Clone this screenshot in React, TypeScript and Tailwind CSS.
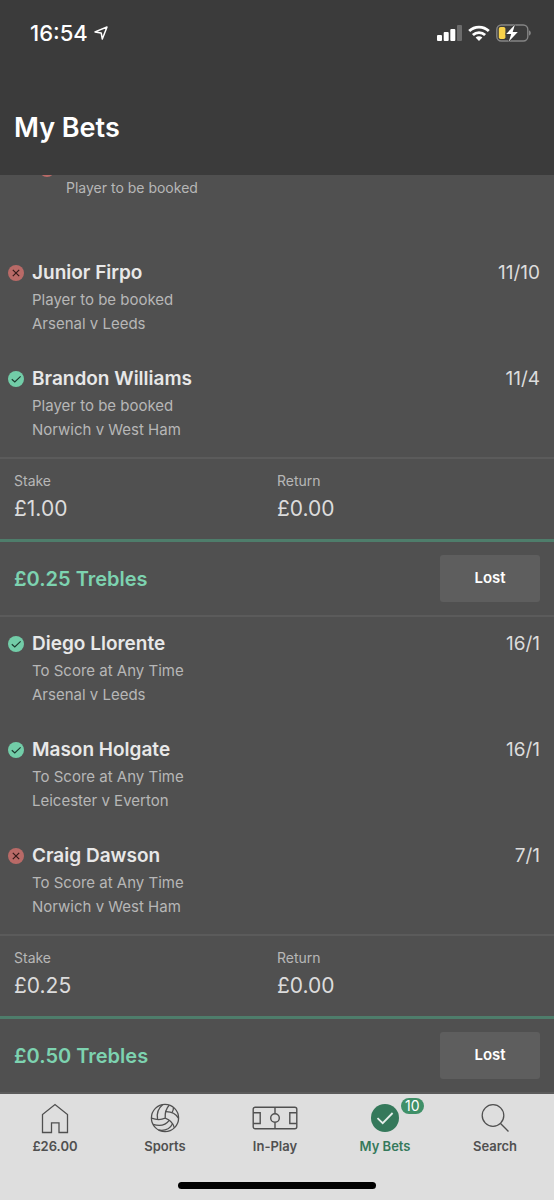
type Result = "won" | "lost";

type Selection = {
  name: string;
  market: string;
  fixture: string;
  odds: string;
  result: Result;
};

const BOOKINGS: Selection[] = [
  { name: "Junior Firpo", market: "Player to be booked", fixture: "Arsenal v Leeds", odds: "11/10", result: "lost" },
  { name: "Brandon Williams", market: "Player to be booked", fixture: "Norwich v West Ham", odds: "11/4", result: "won" },
];

const SCORERS: Selection[] = [
  { name: "Diego Llorente", market: "To Score at Any Time", fixture: "Arsenal v Leeds", odds: "16/1", result: "won" },
  { name: "Mason Holgate", market: "To Score at Any Time", fixture: "Leicester v Everton", odds: "16/1", result: "won" },
  { name: "Craig Dawson", market: "To Score at Any Time", fixture: "Norwich v West Ham", odds: "7/1", result: "lost" },
];

function ResultIcon({ result }: { result: Result }) {
  return (
    <svg viewBox="0 0 16 16" className="h-4 w-4 shrink-0" role="img" aria-label={result}>
      <circle cx="8" cy="8" r="8" fill={result === "won" ? "#72cda8" : "#b96a67"} />
      {result === "won" ? (
        <path d="M3.8 8.2 6.8 11 12.6 5.4" fill="none" stroke="#1d3b30" strokeWidth="1.2" />
      ) : (
        <path d="M4.8 4.8 11.2 11.2M11.2 4.8 4.8 11.2" fill="none" stroke="#351a19" strokeWidth="1.2" />
      )}
    </svg>
  );
}

function StatusBar() {
  return (
    <div className="flex h-[66px] items-center justify-between pr-[23px] pl-[30px]">
      <div className="flex items-center gap-1.5">
        <span className="text-[22px] font-medium">16:54</span>
        <svg viewBox="0 0 14 14" className="h-3.5 w-3.5" fill="none" stroke="currentColor" strokeWidth="1.5" strokeLinejoin="round">
          <path d="M13 1 8.3 13 7.2 6.9 1 5.9Z" />
        </svg>
      </div>
      <div className="flex items-center gap-1.5">
        <svg viewBox="0 0 25 16" className="h-4 w-[25px]" fill="currentColor">
          <rect x="0" y="10" width="5" height="6" rx="1" />
          <rect x="6.7" y="7" width="5" height="9" rx="1" />
          <rect x="13.3" y="4" width="5" height="12" rx="1" />
          <rect x="20" y="0" width="5" height="16" rx="1" opacity="0.25" />
        </svg>
        <svg viewBox="0 0 22 16" className="h-4 w-[22px]" fill="none" stroke="currentColor" strokeWidth="2.8">
          <path d="M1.2 6.1a14 14 0 0 1 19.6 0" />
          <path d="M4.9 10a8.8 8.8 0 0 1 12.2 0" />
          <path d="M11 16 7.6 12.6a4.9 4.9 0 0 1 6.8 0Z" fill="currentColor" stroke="none" />
        </svg>
        <svg viewBox="0 0 35 18" className="h-[18px] w-[35px]">
          <rect x="0.8" y="1" width="31" height="16" rx="4.5" fill="none" stroke="#858585" strokeWidth="1.4" />
          <path d="M33 6.3q1.9 1 1.9 2.7T33 11.7Z" fill="#858585" />
          <rect x="2.8" y="3" width="6.6" height="12" rx="1.8" fill="#f8d24a" />
          <path d="M18.9 0.8 10.2 9.9h5L12.8 17.4 21.8 8h-5.1Z" fill="#fff" stroke="#3b3b3b" strokeWidth="1.2" paintOrder="stroke" />
        </svg>
      </div>
    </div>
  );
}

function SelectionRow({ selection }: { selection: Selection }) {
  return (
    <li className="flex justify-between pr-3.5 pl-2">
      <div className="flex gap-2">
        <div className="flex h-[30px] items-center">
          <ResultIcon result={selection.result} />
        </div>
        <div>
          <h3 className="text-[19px] leading-[30px] font-semibold text-[#e8e8e8]">{selection.name}</h3>
          <p className="text-[15px] leading-6 text-[#b7b7b7]">{selection.market}</p>
          <p className="text-[15px] leading-6 text-[#b7b7b7]">{selection.fixture}</p>
        </div>
      </div>
      <span className="text-[19px] leading-[30px] text-[#dcdcdc]">{selection.odds}</span>
    </li>
  );
}

function SelectionList({ selections }: { selections: Selection[] }) {
  return (
    <ul className="flex flex-col gap-7 border-b-2 border-[#5b5b5b] pb-[15px]">
      {selections.map((selection) => (
        <SelectionRow key={selection.name} selection={selection} />
      ))}
    </ul>
  );
}

function Totals({ stake, returned }: { stake: string; returned: string }) {
  return (
    <dl className="grid grid-cols-2 border-b-[3px] border-[#4e7d6b] pt-3 pb-4">
      <div className="flex flex-col gap-1 pl-3.5">
        <dt className="text-[14px] leading-5 text-[#b7b7b7]">Stake</dt>
        <dd className="text-[21px] leading-7 text-[#dcdcdc]">{stake}</dd>
      </div>
      <div className="flex flex-col gap-1">
        <dt className="text-[14px] leading-5 text-[#b7b7b7]">Return</dt>
        <dd className="text-[21px] leading-7 text-[#dcdcdc]">{returned}</dd>
      </div>
    </dl>
  );
}

function BetHeader({ title }: { title: string }) {
  return (
    <div className="flex items-center justify-between border-b-2 border-[#5b5b5b] px-3.5 py-[13px]">
      <h2 className="text-[20px] font-semibold text-[#7dd3b0]">{title}</h2>
      <button type="button" className="h-[47px] w-[100px] rounded-[3px] bg-[#5e5e5e] text-[15px] font-semibold text-white">
        Lost
      </button>
    </div>
  );
}

function NavItem({ label, active, children }: { label: string; active?: boolean; children: React.ReactNode }) {
  return (
    <a
      href="#"
      aria-current={active ? "page" : undefined}
      className={`flex flex-col items-center gap-0.5 ${active ? "text-[#35795b]" : "text-[#505050]"}`}
    >
      <span className="relative flex h-8 items-center">{children}</span>
      <span className="text-[13px] leading-5 font-semibold">{label}</span>
    </a>
  );
}

function BottomNav() {
  return (
    <footer className="bg-[#dedede] pt-2 pb-[11px]">
      <nav className="grid grid-cols-5 pr-1">
        <NavItem label="£26.00">
          <svg viewBox="0 0 28 32" className="h-8 w-7" fill="none" stroke="currentColor" strokeWidth="1.3">
            <path d="M1.5 30.5V12.5L14 2.5 26.5 12.5V30.5H18V20.8H10.5V30.5Z" />
          </svg>
        </NavItem>
        <NavItem label="Sports">
          <svg viewBox="0 0 30 30" className="h-[30px] w-[30px]" fill="none" stroke="currentColor" strokeWidth="1.3">
            <circle cx="15" cy="15" r="13.6" />
            <path d="M1.5 15.2C6 16.8 11 17 15.2 15.2 14.8 9.5 16 5.5 19.2 2.2" />
            <path d="M7.6 16.4C6.4 10.5 8.2 5.5 12.8 1.6" />
            <path d="M15.9 8.7C21.3 8.6 25.8 10.8 28.4 15.2" />
            <path d="M15.2 15.2C20 17 23.2 20.2 24.4 24.8" />
            <path d="M21.8 9.8C23.4 7.8 23.6 6.4 23.4 4.6" />
            <path d="M3 21.3C9.8 23.3 16 21.7 19.2 17.3" />
            <path d="M8.5 27C14.5 28 20 25.7 22.6 20.7" />
          </svg>
        </NavItem>
        <NavItem label="In-Play">
          <svg viewBox="0 0 46 24" className="h-6 w-[46px]" fill="none" stroke="currentColor" strokeWidth="1.4">
            <rect x="1.2" y="1.2" width="43.6" height="21.6" rx="2" />
            <path d="M23 1.2v6.4M23 16.4v6.4M1.2 6.7H8.2v10.8H1.2M44.8 6.7h-7v10.8h7" />
            <circle cx="23" cy="12" r="4.3" />
          </svg>
        </NavItem>
        <NavItem label="My Bets" active>
          <svg viewBox="0 0 28 28" className="h-7 w-7">
            <circle cx="14" cy="14" r="14" fill="#35795b" />
            <path d="M6.5 14.2 11.7 19.2 21.6 9" fill="none" stroke="#e6efeb" strokeWidth="1.8" />
          </svg>
          <span className="absolute -top-1 left-[30px] rounded-full bg-[#3f9068] px-1 text-[14px] leading-4 text-white">10</span>
        </NavItem>
        <NavItem label="Search">
          <svg viewBox="0 0 30 30" className="h-[30px] w-[30px]" fill="none" stroke="currentColor" strokeWidth="1.3">
            <circle cx="13" cy="12.5" r="10.8" />
            <path d="M20.3 20.2 28.5 28.5" />
          </svg>
        </NavItem>
      </nav>
      <div className="mx-auto mt-[26px] h-[7px] w-[198px] rounded-full bg-black" />
    </footer>
  );
}

export default function App() {
  return (
    <div className="flex min-h-screen flex-col bg-[#505050] font-['Inter',sans-serif]">
      <header className="bg-[#3b3b3b] text-white">
        <StatusBar />
        <h1 className="px-3.5 pt-11 pb-[29px] text-[27px] leading-9 font-semibold">My Bets</h1>
      </header>

      <main className="flex flex-1 flex-col overflow-hidden">
        {/* Tail of the bet scrolled under the header */}
        <div className="-mt-3.5 mb-[58px] flex gap-[11px] pl-[39px]">
          <ResultIcon result="lost" />
          <p className="pt-[15px] text-[14px] leading-6 text-[#b7b7b7]">Player to be booked</p>
        </div>
        <SelectionList selections={BOOKINGS} />
        <Totals stake="£1.00" returned="£0.00" />

        <BetHeader title="£0.25 Trebles" />
        <div className="pt-3">
          <SelectionList selections={SCORERS} />
        </div>
        <Totals stake="£0.25" returned="£0.00" />

        <BetHeader title="£0.50 Trebles" />
      </main>

      <BottomNav />
    </div>
  );
}
